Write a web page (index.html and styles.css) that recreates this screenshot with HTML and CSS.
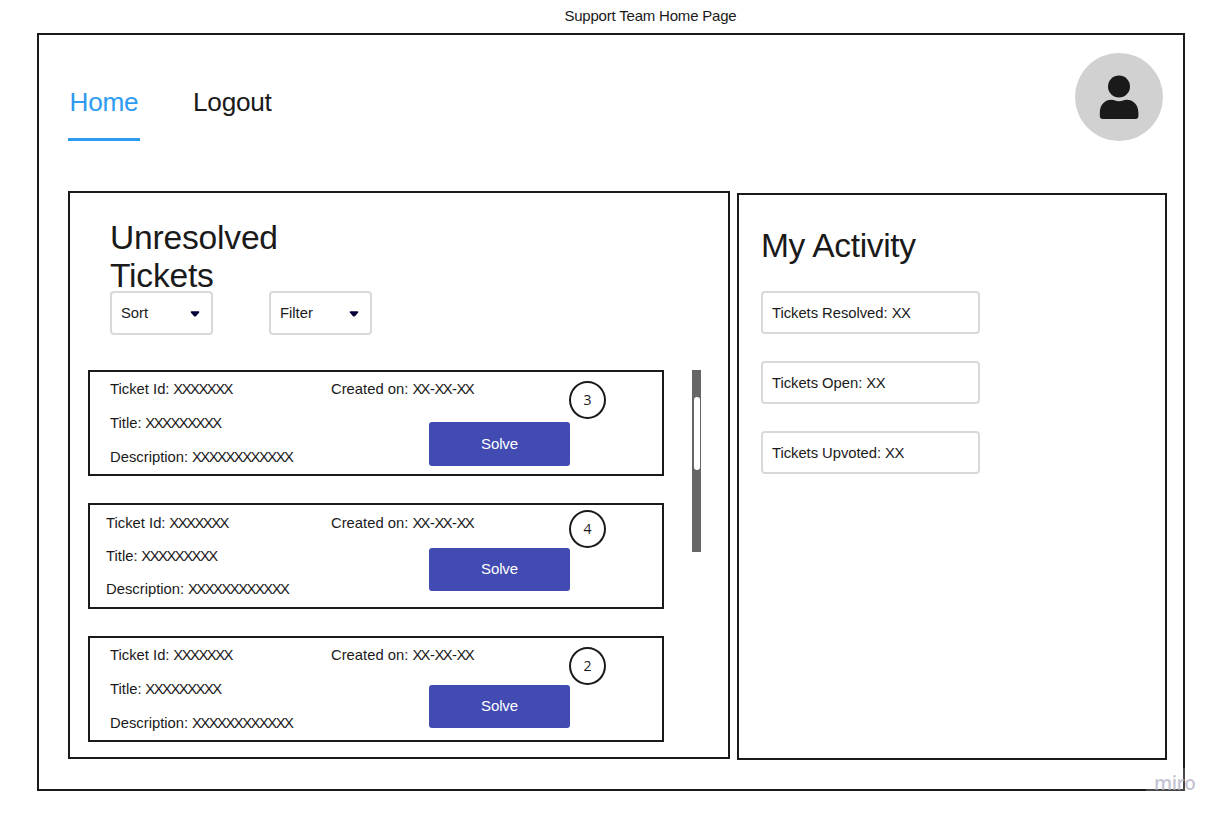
FILE: index.html
```html
<!DOCTYPE html>
<html lang="en">
<head>
<meta charset="utf-8">
<title>Support Team Home Page</title>
<link rel="stylesheet" href="styles.css">
</head>
<body>
<h1 class="page-title">Support Team Home Page</h1>
<div class="frame">
  <header class="topbar">
    <nav class="nav">
      <a class="nav-link active">Home</a>
      <a class="nav-link">Logout</a>
    </nav>
    <svg class="avatar" viewBox="0 0 88 88">
      <circle cx="44" cy="44" r="44" fill="#d1d1d1"/>
      <circle cx="44" cy="33.5" r="11" fill="#1a1a1a"/>
      <path d="M24.8 60C24.8 51.5 30 46.8 36.5 46.8C39.5 46.8 40.5 48.2 44 48.2C47.500 48.200 48.500 46.800 51.500 46.800C58 46.800 63.400 51.500 63.400 60V63Q63.400 66 60.400 66H27.800Q24.800 66 24.800 63Z" fill="#1a1a1a"/>
    </svg>
  </header>
  <main class="columns">
    <section class="panel tickets">
      <h2 class="heading">Unresolved<br>Tickets</h2>
      <div class="filters">
        <div class="select">Sort<svg class="caret" viewBox="0 0 10 6"><path d="M1.500 .300H8.500Q9.800 .600 9 1.800L6.200 5Q5 6.100 3.800 5L1 1.800Q.200 .600 1.500 .300Z"/></svg></div>
        <div class="select">Filter<svg class="caret" viewBox="0 0 10 6"><path d="M1.500 .300H8.500Q9.800 .600 9 1.800L6.200 5Q5 6.100 3.800 5L1 1.800Q.200 .600 1.500 .300Z"/></svg></div>
      </div>
      <div class="list-row">
        <div class="list">
          <article class="card card-first">
            <div class="info">
              <div>Ticket Id: <span class="mask">XXXXXXX</span></div>
              <div>Title: <span class="mask">XXXXXXXXX</span></div>
              <div>Description: <span class="mask">XXXXXXXXXXXX</span></div>
            </div>
            <div class="side">
              <div class="meta"><span class="created">Created on: <span class="date"><i>X</i>X-<i>X</i>X-<i>X</i>X</span></span><span class="votes">3</span></div>
              <button class="solve">Solve</button>
            </div>
          </article>
          <article class="card card-second">
            <div class="info">
              <div>Ticket Id: <span class="mask">XXXXXXX</span></div>
              <div>Title: <span class="mask">XXXXXXXXX</span></div>
              <div>Description: <span class="mask">XXXXXXXXXXXX</span></div>
            </div>
            <div class="side">
              <div class="meta"><span class="created">Created on: <span class="date"><i>X</i>X-<i>X</i>X-<i>X</i>X</span></span><span class="votes">4</span></div>
              <button class="solve">Solve</button>
            </div>
          </article>
          <article class="card card-third">
            <div class="info">
              <div>Ticket Id: <span class="mask">XXXXXXX</span></div>
              <div>Title: <span class="mask">XXXXXXXXX</span></div>
              <div>Description: <span class="mask">XXXXXXXXXXXX</span></div>
            </div>
            <div class="side">
              <div class="meta"><span class="created">Created on: <span class="date"><i>X</i>X-<i>X</i>X-<i>X</i>X</span></span><span class="votes">2</span></div>
              <button class="solve">Solve</button>
            </div>
          </article>
        </div>
        <div class="scrollbar"><div class="thumb"></div></div>
      </div>
    </section>
    <section class="panel activity">
      <h2 class="heading">My Activity</h2>
      <div class="stat">Tickets Resolved: <span class="pair">XX</span></div>
      <div class="stat">Tickets Open: <span class="pair">XX</span></div>
      <div class="stat">Tickets Upvoted: <span class="pair">XX</span></div>
    </section>
  </main>
</div>
<div class="watermark">miro</div>
</body>
</html>
```
FILE: styles.css
```css
* { box-sizing: border-box; }

body {
  margin: 0;
  width: 1222px;
  height: 818px;
  overflow: hidden;
  position: relative;
  background: #fff;
  color: #1a1a1a;
  font: 14.8px "Liberation Sans", Arial, sans-serif;
}

.page-title {
  margin: 0;
  height: 33px;
  padding-left: 564.4px;
  font-size: 15px;
  font-weight: 400;
  line-height: 32px;
  letter-spacing: -0.2px;
  white-space: nowrap;
}

.frame {
  width: 1148px;
  height: 758px;
  margin-left: 37px;
  border: 2px solid #1a1a1a;
}

.topbar {
  display: flex;
  justify-content: space-between;
  height: 156px;
  padding: 18px 20px 0 29px;
}

.nav {
  display: flex;
  gap: 53px;
  padding-top: 31px;
}

.nav-link {
  height: 57px;
  font-size: 26.2px;
  line-height: 36px;
  letter-spacing: -0.25px;
}

.nav-link.active {
  width: 72px;
  padding-left: 1.5px;
  color: #2d9bf0;
  border-bottom: 3px solid #2d9bf0;
}

.avatar { width: 88px; height: 88px; }

.columns {
  display: flex;
  align-items: flex-start;
  gap: 7px;
  padding-left: 29px;
}

.panel { border: 2px solid #1a1a1a; }

.heading {
  margin: 0;
  font-size: 33.6px;
  font-weight: 400;
  line-height: 38px;
}

.tickets {
  width: 662px;
  height: 568px;
  padding: 26px 0 0 18px;
}

.tickets .heading {
  height: 72px;
  padding-left: 22px;
  letter-spacing: -0.2px;
}

.filters {
  display: flex;
  gap: 56px;
  padding-left: 22px;
}

.select {
  display: flex;
  align-items: center;
  justify-content: space-between;
  width: 103px;
  height: 44px;
  padding: 0 11px 0 9px;
  border: 2px solid #d9d9d9;
  border-radius: 4px;
}

.caret { width: 10px; height: 6px; margin-top: 1px; fill: #050038; }

.list-row {
  display: flex;
  gap: 28px;
  padding-top: 35px;
}

.list {
  display: flex;
  flex-direction: column;
  gap: 27px;
}

.card {
  display: flex;
  width: 576px;
  height: 106px;
  border: 2px solid #1a1a1a;
}

.info {
  width: 241px;
  padding-left: 20px;
  line-height: 34px;
  white-space: nowrap;
}

.mask { letter-spacing: -1.5px; margin-left: -0.3px; }
.date { letter-spacing: -0.45px; }
.date i { font-style: normal; letter-spacing: -1.7px; }
.pair { letter-spacing: -0.5px; }

.meta {
  display: flex;
  align-items: flex-start;
  height: 50px;
}

.created {
  width: 238px;
  line-height: 34px;
  white-space: nowrap;
}

.votes {
  width: 37px;
  height: 38px;
  margin-top: 9px;
  border: 2px solid #1a1a1a;
  border-radius: 50%;
  font: 14px/33px "Open Sans", sans-serif;
  text-align: center;
}

.solve {
  display: block;
  width: 141px;
  height: 44px;
  margin-left: 98px;
  padding: 0 0 2px;
  border: 0;
  border-radius: 3px;
  background: #414bb2;
  color: #fff;
  font: 15px "Liberation Sans", Arial, sans-serif;
  letter-spacing: -0.1px;
}

.card-second .info { padding: 2px 0 0 16px; line-height: 33px; }
.card-second .created { padding-top: 1px; }
.card-second .meta { height: 43px; }
.card-second .votes { margin-top: 5px; }
.card-third .meta { height: 47px; }

.card-second .solve,
.card-third .solve { height: 43px; }

.scrollbar {
  width: 9px;
  height: 182px;
  padding: 27px 1px 0 2px;
  background: #666;
}

.thumb {
  height: 73px;
  border-radius: 3px;
  background: #fff;
}

.activity {
  width: 430px;
  height: 567px;
  margin-top: 2px;
  padding: 32px 0 0 22px;
}

.activity .heading {
  height: 64px;
  letter-spacing: -0.35px;
}

.stat {
  width: 219px;
  height: 43px;
  margin-bottom: 27px;
  padding-left: 9px;
  border: 2px solid #d9d9d9;
  border-radius: 4px;
  line-height: 40px;
  letter-spacing: -0.04px;
}

.watermark {
  position: absolute;
  left: 1146px;
  top: 768px;
  width: 50px;
  height: 32px;
  padding-left: 8px;
  background: rgba(255, 255, 255, 0.2);
  color: rgba(178, 176, 196, 0.75);
  font: 600 19px/31px "Open Sans", sans-serif;
  letter-spacing: -0.5px;
}
```
